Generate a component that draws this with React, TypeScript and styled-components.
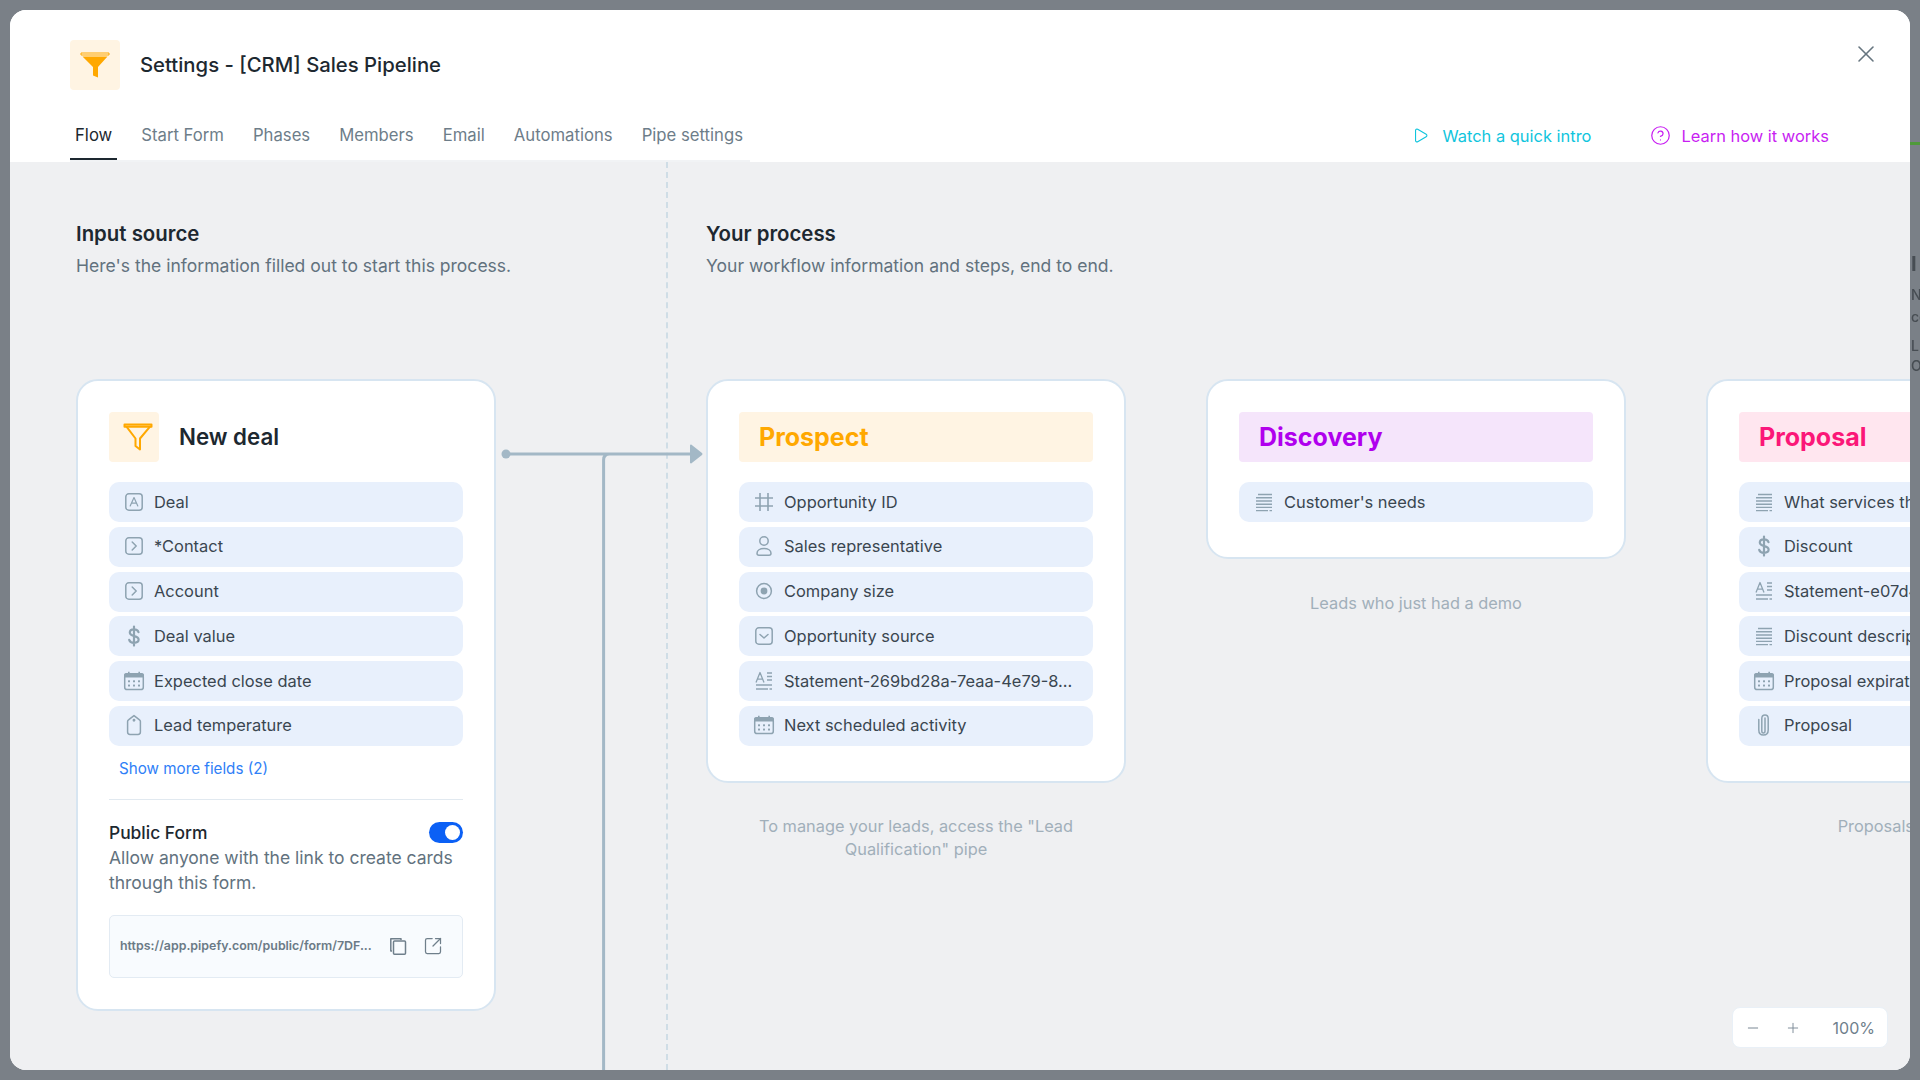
import { ReactNode } from "react";
import styled, { createGlobalStyle } from "styled-components";
import { CircleHelp, Minus, Play, Plus, SquareArrowOutUpRight, X } from "lucide-react";

const GlobalStyle = createGlobalStyle`
  html, body {
    margin: 0;
    padding: 0;
    height: 100%;
    overflow: hidden;
    font-family: Inter, "Liberation Sans", sans-serif;
  }
  * { box-sizing: border-box; }
`;

const Page = styled.div`
  position: relative;
  width: 100vw;
  height: 100vh;
  padding: 10px;
  background: #7a8087;
  overflow: hidden;
`;

const GutterMark = styled.span<{ $top: number; $size: number; $bold?: boolean }>`
  position: absolute;
  left: 1911px;
  top: ${(p) => p.$top}px;
  font-size: ${(p) => p.$size}px;
  font-weight: ${(p) => (p.$bold ? 700 : 500)};
  line-height: 1;
  color: #474d53;
  white-space: nowrap;
  filter: blur(0.4px);
`;

const GutterBar = styled.div`
  position: absolute;
  left: 1910px;
  top: 142px;
  width: 10px;
  height: 3px;
  background: #4f9a3a;
`;

const Modal = styled.div`
  position: relative;
  width: 1900px;
  height: 1060px;
  background: #fff;
  border-radius: 16px;
  overflow: hidden;
  display: flex;
  flex-direction: column;
`;

const Header = styled.header`
  height: 152px;
  padding-top: 30px;
  flex-shrink: 0;
  background: #fff;
`;

const TitleRow = styled.div`
  display: flex;
  align-items: center;
  gap: 20px;
  height: 50px;
  padding-left: 60px;
`;

const IconTile = styled.div`
  width: 50px;
  height: 50px;
  flex-shrink: 0;
  border-radius: 4px;
  background: #fff4e3;
  display: flex;
  align-items: center;
  justify-content: center;
`;

const PageTitle = styled.h1`
  margin: 0 0 2px;
  font-size: 20.3px;
  font-weight: 500;
  color: #1d2830;
`;

const CloseButton = styled.button`
  position: absolute;
  top: 30px;
  right: 30px;
  width: 28px;
  height: 28px;
  padding: 0;
  border: 0;
  background: none;
  color: #66757f;
  display: flex;
  align-items: center;
  justify-content: center;
`;

const NavRow = styled.div`
  display: flex;
  justify-content: space-between;
  align-items: flex-start;
  margin-top: 22px;
  padding: 0 81px 0 60px;
`;

const Tabs = styled.nav`
  display: flex;
  gap: 19px;
  width: 680px;
  height: 50px;
  border-bottom: 2px solid #f1f3f5;
`;

const Tab = styled.a<{ $active?: boolean }>`
  height: 48px;
  padding: 0 5px;
  display: flex;
  align-items: center;
  font-size: 16.7px;
  color: ${(p) => (p.$active ? "#1d2830" : "#6d7d89")};
  border-bottom: 2px solid ${(p) => (p.$active ? "#1d2830" : "transparent")};
`;

const HelpLinks = styled.div`
  display: flex;
  gap: 59px;
  height: 47px;
`;

const HelpLink = styled.a<{ $color: string; $gap: number }>`
  display: flex;
  align-items: center;
  gap: ${(p) => p.$gap}px;
  font-size: 16.45px;
  color: ${(p) => p.$color};
`;

const Board = styled.main`
  position: relative;
  flex: 1;
  min-height: 0;
  display: flex;
  background: #eff0f2;
  overflow: hidden;
`;

const InputColumn = styled.section`
  width: 658px;
  flex-shrink: 0;
  padding-left: 66px;
  border-right: 2px dashed #cfdde6;
`;

const ProcessColumn = styled.section`
  flex: 1;
  min-width: 0;
  padding-left: 38px;
`;

const SectionHead = styled.div`
  height: 217px;
  padding-top: 57.5px;
`;

const SectionTitle = styled.h2`
  margin: 0;
  font-size: 20.4px;
  line-height: 28px;
  font-weight: 600;
  color: #1d2830;
`;

const SectionText = styled.p`
  margin: 4.5px 0 0;
  font-size: 17.55px;
  line-height: 28px;
  color: #62727e;
`;

const Stages = styled.div`
  display: flex;
  gap: 80px;
`;

const StageColumn = styled.div`
  width: 420px;
  flex-shrink: 0;
`;

const Card = styled.article<{ $bottom?: number }>`
  width: 420px;
  padding: 31px 31px ${(p) => p.$bottom ?? 35}px;
  background: #fff;
  border: 2px solid #d7e5f1;
  border-radius: 22px;
`;

const CardHead = styled.div`
  display: flex;
  align-items: center;
  gap: 20px;
  height: 50px;
  margin-bottom: 20px;
`;

const CardName = styled.h3`
  margin: 0 0 2px;
  font-size: 22.3px;
  font-weight: 600;
  color: #1d2830;
`;

const StageHead = styled.h3<{ $bg: string; $color: string }>`
  margin: 0 0 20px;
  height: 50px;
  padding: 0 0 1px 20px;
  display: flex;
  align-items: center;
  border-radius: 4px;
  background: ${(p) => p.$bg};
  color: ${(p) => p.$color};
  font-size: 25px;
  font-weight: 700;
`;

const Fields = styled.ul`
  margin: 0;
  padding: 0;
  list-style: none;
  display: flex;
  flex-direction: column;
  gap: 4.8px;
`;

const FieldRow = styled.li`
  height: 40px;
  padding: 0 14px 1px;
  display: flex;
  align-items: center;
  gap: 9px;
  border-radius: 10px;
  background: #e8f0fc;
  font-size: 16.45px;
  color: #3a4650;
  white-space: nowrap;
  overflow: hidden;
`;

const FieldIconSlot = styled.span`
  width: 22px;
  height: 22px;
  flex-shrink: 0;
  display: flex;
  align-items: center;
  justify-content: center;
  color: #8ea3b1;
`;

const ShowMore = styled.a`
  display: block;
  margin-top: 12px;
  padding-left: 10px;
  font-size: 15.2px;
  line-height: 22px;
  color: #2f80f7;
`;

const Divider = styled.hr`
  margin: 19px 0 22px;
  border: 0;
  border-top: 1px solid #e1e9f0;
`;

const PublicRow = styled.div`
  height: 22px;
  margin-bottom: 1px;
  display: flex;
  align-items: center;
  justify-content: space-between;
`;

const PublicLabel = styled.span`
  font-size: 17.4px;
  font-weight: 500;
  color: #1d2830;
`;

const Toggle = styled.span`
  width: 34px;
  height: 21px;
  padding: 3px;
  border-radius: 11px;
  background: #0b60f5;
  display: flex;
  justify-content: flex-end;
  &::after {
    content: "";
    width: 15px;
    height: 15px;
    border-radius: 50%;
    background: #fff;
  }
`;

const PublicText = styled.p`
  margin: 0 0 20px;
  font-size: 17.5px;
  line-height: 25px;
  color: #62727e;
`;

const UrlBox = styled.div`
  height: 63px;
  padding: 0 20px 1px 10px;
  display: flex;
  align-items: center;
  border: 1px solid #e3ebf3;
  border-radius: 5px;
  background: #f8fbfe;
  color: #6f7f8b;
`;

const UrlText = styled.span`
  width: 269px;
  flex-shrink: 0;
  font-size: 12.4px;
  font-weight: 600;
  color: #6b7a86;
  white-space: nowrap;
`;

const UrlActions = styled.span`
  display: flex;
  gap: 16px;
  align-items: center;
`;

const Caption = styled.p`
  margin: 32.5px 0 0;
  padding: 0 40px;
  text-align: center;
  font-size: 16.35px;
  line-height: 23px;
  color: #a1afba;
`;

const Connector = styled.svg`
  position: absolute;
  left: 480px;
  top: 278px;
  width: 215px;
  height: 630px;
`;

const ZoomBox = styled.div`
  position: absolute;
  right: 22px;
  bottom: 22px;
  width: 156px;
  height: 41px;
  padding: 0 12px;
  display: flex;
  align-items: center;
  background: #fff;
  border: 1px solid #e9f0f7;
  border-radius: 8px;
  color: #7a8894;
`;

const ZoomButton = styled.span`
  width: 16px;
  display: flex;
  justify-content: center;
  margin-right: 24px;
`;

const ZoomValue = styled.span`
  margin-left: auto;
  font-size: 16px;
  color: #6f808c;
`;

const OutlineFunnel = styled.svg`
  margin-left: 7px;
  fill: none;
  stroke: #ffa800;
  stroke-width: 2;
  stroke-linejoin: round;
`;

const stroke = { fill: "none", stroke: "currentColor", strokeWidth: 1.5, strokeLinecap: "round", strokeLinejoin: "round" } as const;

const Box = ({ children }: { children: ReactNode }) => (
  <svg width="20" height="20" viewBox="0 0 20 20" {...stroke}>
    <rect x="1.8" y="1.8" width="16.4" height="16.4" rx="3" />
    {children}
  </svg>
);

const LinesIcon = () => (
  <svg width="20" height="20" viewBox="0 0 20 20" {...stroke} strokeWidth={1.4} strokeLinecap="butt">
    <path d="M4 2.5h14M2 5.8h16M2 9h16M2 12.2h16M2 15.4h16M2 18.6h12M15.5 18.6h2.5" />
  </svg>
);

const CalendarIcon = () => (
  <svg width="22" height="20" viewBox="0 0 22 20">
    <rect x="1.7" y="3" width="18.6" height="15.6" rx="2.4" fill="none" stroke="currentColor" strokeWidth="1.5" />
    <path d="M1 6.6V4.2C1 2.9 2 2 3.2 2H5V.8h1.6V2h8.8V.8H17V2h1.8C20 2 21 2.9 21 4.2v2.4z" fill="currentColor" />
    {[6, 11, 16].map((x) =>
      [10.2, 14.6].map((y) => <rect key={`${x}-${y}`} x={x - 1} y={y - 1} width="2" height="2" rx="0.5" fill="currentColor" />)
    )}
  </svg>
);

const DollarIcon = () => (
  <svg width="20" height="22" viewBox="0 0 20 22" {...stroke} strokeWidth={2.2}>
    <path d="M14.5 7.2C14 5.4 12.3 4.4 10 4.4 7.6 4.4 5.8 5.6 5.8 7.6c0 4.6 8.8 2.4 8.8 7 0 2-1.9 3.2-4.6 3.2-2.4 0-4.2-1.1-4.8-3M10 1.6v19" />
  </svg>
);

const StatementIcon = () => (
  <svg width="20" height="20" viewBox="0 0 20 20" {...stroke} strokeWidth={1.3} strokeLinecap="butt">
    <path d="M2 11.5 6 1.5l4 10M3.4 8.2h5.2M13 2h5M13 5.5h5M13 9h5M2 14h16M2 18h12M15.5 18h2.5" />
  </svg>
);

const fieldIcons: Record<string, ReactNode> = {
  text: <Box><path d="M6.2 14 10 5.5 13.8 14M7.5 11.2h5" strokeWidth={1.2} /></Box>,
  connect: <Box><path d="m8.2 6 4 4-4 4" /></Box>,
  select: <Box><path d="m6 8.5 4 3.5 4-3.5" /></Box>,
  dollar: <DollarIcon />,
  date: <CalendarIcon />,
  tag: (
    <svg width="20" height="22" viewBox="0 0 20 22" {...stroke}>
      <path d="M6 20.4h8c1.4 0 2.4-1 2.4-2.4V7.6c0-.7-.3-1.3-.9-1.7L10 1.6 4.5 5.9c-.6.4-.9 1-.9 1.7V18c0 1.4 1 2.4 2.4 2.4z" />
      <circle cx="10" cy="6.2" r="0.7" fill="currentColor" />
    </svg>
  ),
  hash: (
    <svg width="20" height="20" viewBox="0 0 20 20" {...stroke} strokeWidth={1.6} strokeLinecap="butt">
      <path d="M6 1v18M14 1v18M1 6h18M1 14h18" />
    </svg>
  ),
  person: (
    <svg width="20" height="22" viewBox="0 0 20 22" {...stroke}>
      <circle cx="10" cy="6" r="4.2" />
      <path d="M3 18.2c0-2.8 3-4.6 7-4.6s7 1.8 7 4.6c0 1.2-.8 2-2 2H5c-1.2 0-2-.8-2-2z" />
    </svg>
  ),
  radio: (
    <svg width="20" height="20" viewBox="0 0 20 20">
      <circle cx="10" cy="10" r="7.4" fill="none" stroke="currentColor" strokeWidth="1.5" />
      <circle cx="10" cy="10" r="3.4" fill="currentColor" />
    </svg>
  ),
  statement: <StatementIcon />,
  lines: <LinesIcon />,
  clip: (
    <svg width="20" height="24" viewBox="0 0 20 24" {...stroke}>
      <path d="M11 5v13c0 1.2-.6 2-1.6 2s-1.6-.8-1.6-2V5.5C7.8 3.6 9 2 11 2s3.2 1.6 3.2 3.5V17c0 3-1.8 5-4.8 5s-4.6-2-4.6-5V6.5" />
    </svg>
  ),
};

const Fieldset = ({ items }: { items: [string, string][] }) => (
  <Fields>
    {items.map(([icon, label]) => (
      <FieldRow key={label}>
        <FieldIconSlot>{fieldIcons[icon]}</FieldIconSlot>
        {label}
      </FieldRow>
    ))}
  </Fields>
);

const newDeal: [string, string][] = [
  ["text", "Deal"],
  ["connect", "*Contact"],
  ["connect", "Account"],
  ["dollar", "Deal value"],
  ["date", "Expected close date"],
  ["tag", "Lead temperature"],
];

const stages = [
  {
    name: "Prospect",
    bg: "#fff4e3",
    color: "#ffa800",
    caption: 'To manage your leads, access the "Lead Qualification" pipe',
    fields: [
      ["hash", "Opportunity ID"],
      ["person", "Sales representative"],
      ["radio", "Company size"],
      ["select", "Opportunity source"],
      ["statement", "Statement-269bd28a-7eaa-4e79-8..."],
      ["date", "Next scheduled activity"],
    ] as [string, string][],
  },
  {
    name: "Discovery",
    bg: "#f5e5fb",
    color: "#b000ee",
    caption: "Leads who just had a demo",
    fields: [["lines", "Customer's needs"]] as [string, string][],
  },
  {
    name: "Proposal",
    bg: "#ffe6ef",
    color: "#fb1778",
    caption: "Proposals were sent",
    fields: [
      ["lines", "What services the customer needs"],
      ["dollar", "Discount"],
      ["statement", "Statement-e07d4b1a-93c2-4f10-a..."],
      ["lines", "Discount description"],
      ["date", "Proposal expiration date"],
      ["clip", "Proposal"],
    ] as [string, string][],
  },
];

const FunnelSolid = () => (
  <svg width="30" height="26" viewBox="0 0 30 26">
    <path d="M1 1h28v2H1z" fill="none" stroke="#ffa800" strokeWidth="1" />
    <path d="M2.5 4.5h25L18 15v10.5l-5-2V15z" fill="#ffa800" />
  </svg>
);

const FunnelOutline = () => (
  <OutlineFunnel width="30" height="28" viewBox="0 0 30 28">
    <path d="M1.5 1.5h27v2.2h-27z" />
    <path d="M3.5 3.7 12.5 15.5v7.5l4.5 3.5V15.5l10-11.8" />
  </OutlineFunnel>
);

const CopyIcon = () => (
  <svg width="18" height="18" viewBox="0 0 18 18" fill="none" stroke="currentColor" strokeWidth="1.5" strokeLinejoin="round">
    <path d="M3 14H1.8V1.8H12V3" />
    <rect x="4.5" y="4" width="12" height="13.2" rx="1" />
  </svg>
);

export default function App() {
  return (
    <Page>
      <GlobalStyle />
      <GutterBar />
      <GutterMark $top={254} $size={20} $bold>I</GutterMark>
      <GutterMark $top={288} $size={14}>NT</GutterMark>
      <GutterMark $top={310} $size={14}>cc</GutterMark>
      <GutterMark $top={339} $size={14}>L</GutterMark>
      <GutterMark $top={359} $size={14}>OC</GutterMark>
      <Modal>
        <Header>
          <TitleRow>
            <IconTile>
              <FunnelSolid />
            </IconTile>
            <PageTitle>Settings - [CRM] Sales Pipeline</PageTitle>
          </TitleRow>
          <CloseButton aria-label="Close">
            <X size={28} strokeWidth={1.3} />
          </CloseButton>
          <NavRow>
            <Tabs>
              <Tab $active>Flow</Tab>
              <Tab>Start Form</Tab>
              <Tab>Phases</Tab>
              <Tab>Members</Tab>
              <Tab>Email</Tab>
              <Tab>Automations</Tab>
              <Tab>Pipe settings</Tab>
            </Tabs>
            <HelpLinks>
              <HelpLink $color="#10c5dd" $gap={13}>
                <Play size={17} strokeWidth={1.6} />
                Watch a quick intro
              </HelpLink>
              <HelpLink $color="#c81ef2" $gap={10}>
                <CircleHelp size={21} strokeWidth={1.4} />
                Learn how it works
              </HelpLink>
            </HelpLinks>
          </NavRow>
        </Header>
        <Board>
          <InputColumn>
            <SectionHead>
              <SectionTitle>Input source</SectionTitle>
              <SectionText>Here's the information filled out to start this process.</SectionText>
            </SectionHead>
            <Card $bottom={31}>
              <CardHead>
                <IconTile>
                  <FunnelOutline />
                </IconTile>
                <CardName>New deal</CardName>
              </CardHead>
              <Fieldset items={newDeal} />
              <ShowMore>Show more fields (2)</ShowMore>
              <Divider />
              <PublicRow>
                <PublicLabel>Public Form</PublicLabel>
                <Toggle />
              </PublicRow>
              <PublicText>Allow anyone with the link to create cards through this form.</PublicText>
              <UrlBox>
                <UrlText>https://app.pipefy.com/public/form/7DF...</UrlText>
                <UrlActions>
                  <CopyIcon />
                  <SquareArrowOutUpRight size={20} strokeWidth={1.5} />
                </UrlActions>
              </UrlBox>
            </Card>
          </InputColumn>
          <ProcessColumn>
            <SectionHead>
              <SectionTitle>Your process</SectionTitle>
              <SectionText>Your workflow information and steps, end to end.</SectionText>
            </SectionHead>
            <Stages>
              {stages.map((stage) => (
                <StageColumn key={stage.name}>
                  <Card>
                    <StageHead $bg={stage.bg} $color={stage.color}>{stage.name}</StageHead>
                    <Fieldset items={stage.fields} />
                  </Card>
                  <Caption>{stage.caption}</Caption>
                </StageColumn>
              ))}
            </Stages>
          </ProcessColumn>
          <Connector viewBox="0 0 215 630" fill="none">
            <circle cx="16" cy="14" r="4.5" fill="#a3b8c6" />
            <path d="M16 14h186M113.6 630V20c0-4 2-6 6-6" stroke="#a3b8c6" strokeWidth="3" />
            <path d="M200 5.5c0-.8.9-1.2 1.5-.7l10.5 8.2c.6.5.6 1.5 0 2l-10.5 8.2c-.6.5-1.5.1-1.5-.7z" fill="#a3b8c6" />
          </Connector>
          <ZoomBox>
            <ZoomButton><Minus size={22} strokeWidth={1.5} /></ZoomButton>
            <ZoomButton><Plus size={26} strokeWidth={1.4} /></ZoomButton>
            <ZoomValue>100%</ZoomValue>
          </ZoomBox>
        </Board>
      </Modal>
    </Page>
  );
}
